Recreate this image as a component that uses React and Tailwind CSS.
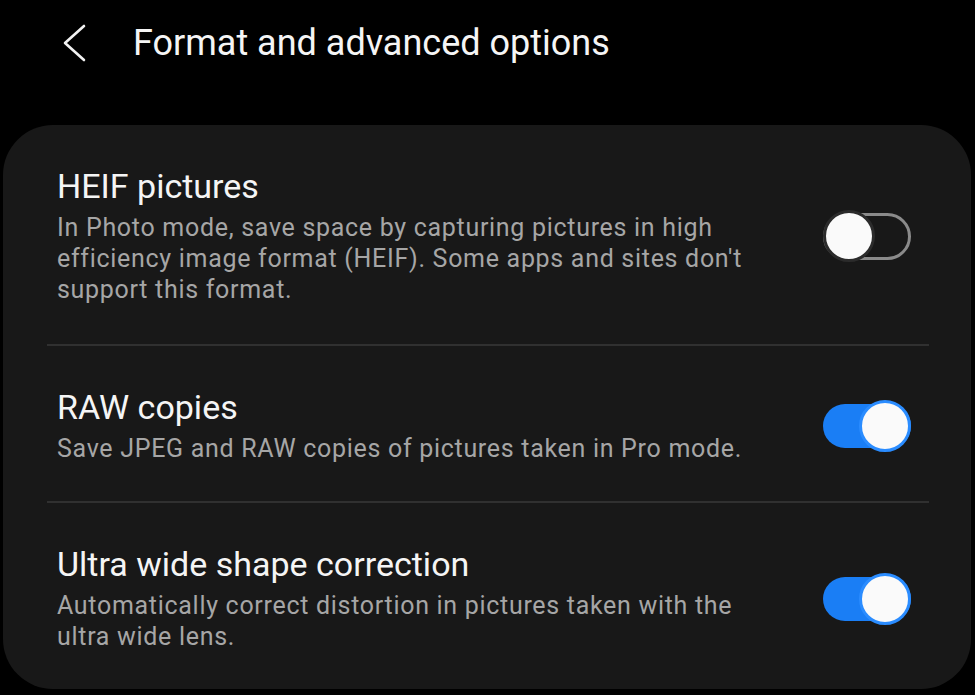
import React, { useState } from 'react';

const settings = [
  {
    id: 'heif',
    title: 'HEIF pictures',
    desc: "In Photo mode, save space by capturing pictures in high efficiency image format (HEIF). Some apps and sites don't support this format.",
    on: false,
    pad: 'pt-[42px] pb-[39px]',
  },
  {
    id: 'raw',
    title: 'RAW copies',
    desc: 'Save JPEG and RAW copies of pictures taken in Pro mode.',
    on: true,
    pad: 'pt-[42px] pb-[37px]',
  },
  {
    id: 'ultra',
    title: 'Ultra wide shape correction',
    desc: 'Automatically correct distortion in pictures taken with the ultra wide lens.',
    on: true,
    pad: 'pt-[42px] pb-[38px]',
  },
];

function Toggle({ on, onClick }) {
  return (
    <button onClick={onClick} className="relative w-[88px] h-[52px] flex items-center shrink-0">
      {on ? (
        <div className="w-full h-[44px] rounded-full bg-[#1a7ef5]" />
      ) : (
        <div className="w-full h-[47px] rounded-full border-[3px] border-[#8a8a8a]" />
      )}
      <div
        className={
          on
            ? 'absolute right-0 top-0 w-[52px] h-[52px] rounded-full bg-[#fafafa] border-[3px] border-[#2a8cff]'
            : 'absolute left-0 top-0 w-[52px] h-[52px] rounded-full bg-[#fafafa] border-[3px] border-[#2b2b2b]'
        }
      />
    </button>
  );
}

export default function App() {
  const [items, setItems] = useState(settings);

  const flip = (id) =>
    setItems((prev) => prev.map((s) => (s.id === id ? { ...s, on: !s.on } : s)));

  return (
    <div className="w-[975px] h-[695px] bg-black overflow-hidden font-['Roboto',sans-serif]">
      {/* top bar */}
      <div className="h-[125px] flex items-start pt-[21px]">
        <svg className="ml-[61px] mt-[3px]" width="26" height="38" viewBox="0 0 26 38">
          <polyline points="23,2 4,19 23,36" fill="none" stroke="#f2f2f2" strokeWidth="2.6" strokeLinecap="round" strokeLinejoin="round" />
        </svg>
        <h1 className="ml-[46px] text-[36px] leading-[44px] text-[#f5f5f5]">Format and advanced options</h1>
      </div>

      {/* card */}
      <div className="ml-[3px] mr-[4px] h-[564px] rounded-[50px] bg-[#181818]">
        {items.map((s, i) => (
          <div key={s.id}>
            {i > 0 && <div className="ml-[44px] mr-[42px] h-[2px] bg-[#303030]" />}
            <div className={'flex items-center pl-[54px] pr-[60px] ' + s.pad}>
              <div className="flex-1 pr-[68px]">
                <div className="text-[34px] leading-[38px] text-[#f5f5f5]">{s.title}</div>
                <div className="mt-[7px] text-[25px] leading-[31px] tracking-[0.7px] text-[#a6a6a6]">{s.desc}</div>
              </div>
              <Toggle on={s.on} onClick={() => flip(s.id)} />
            </div>
          </div>
        ))}
      </div>
    </div>
  );
}
